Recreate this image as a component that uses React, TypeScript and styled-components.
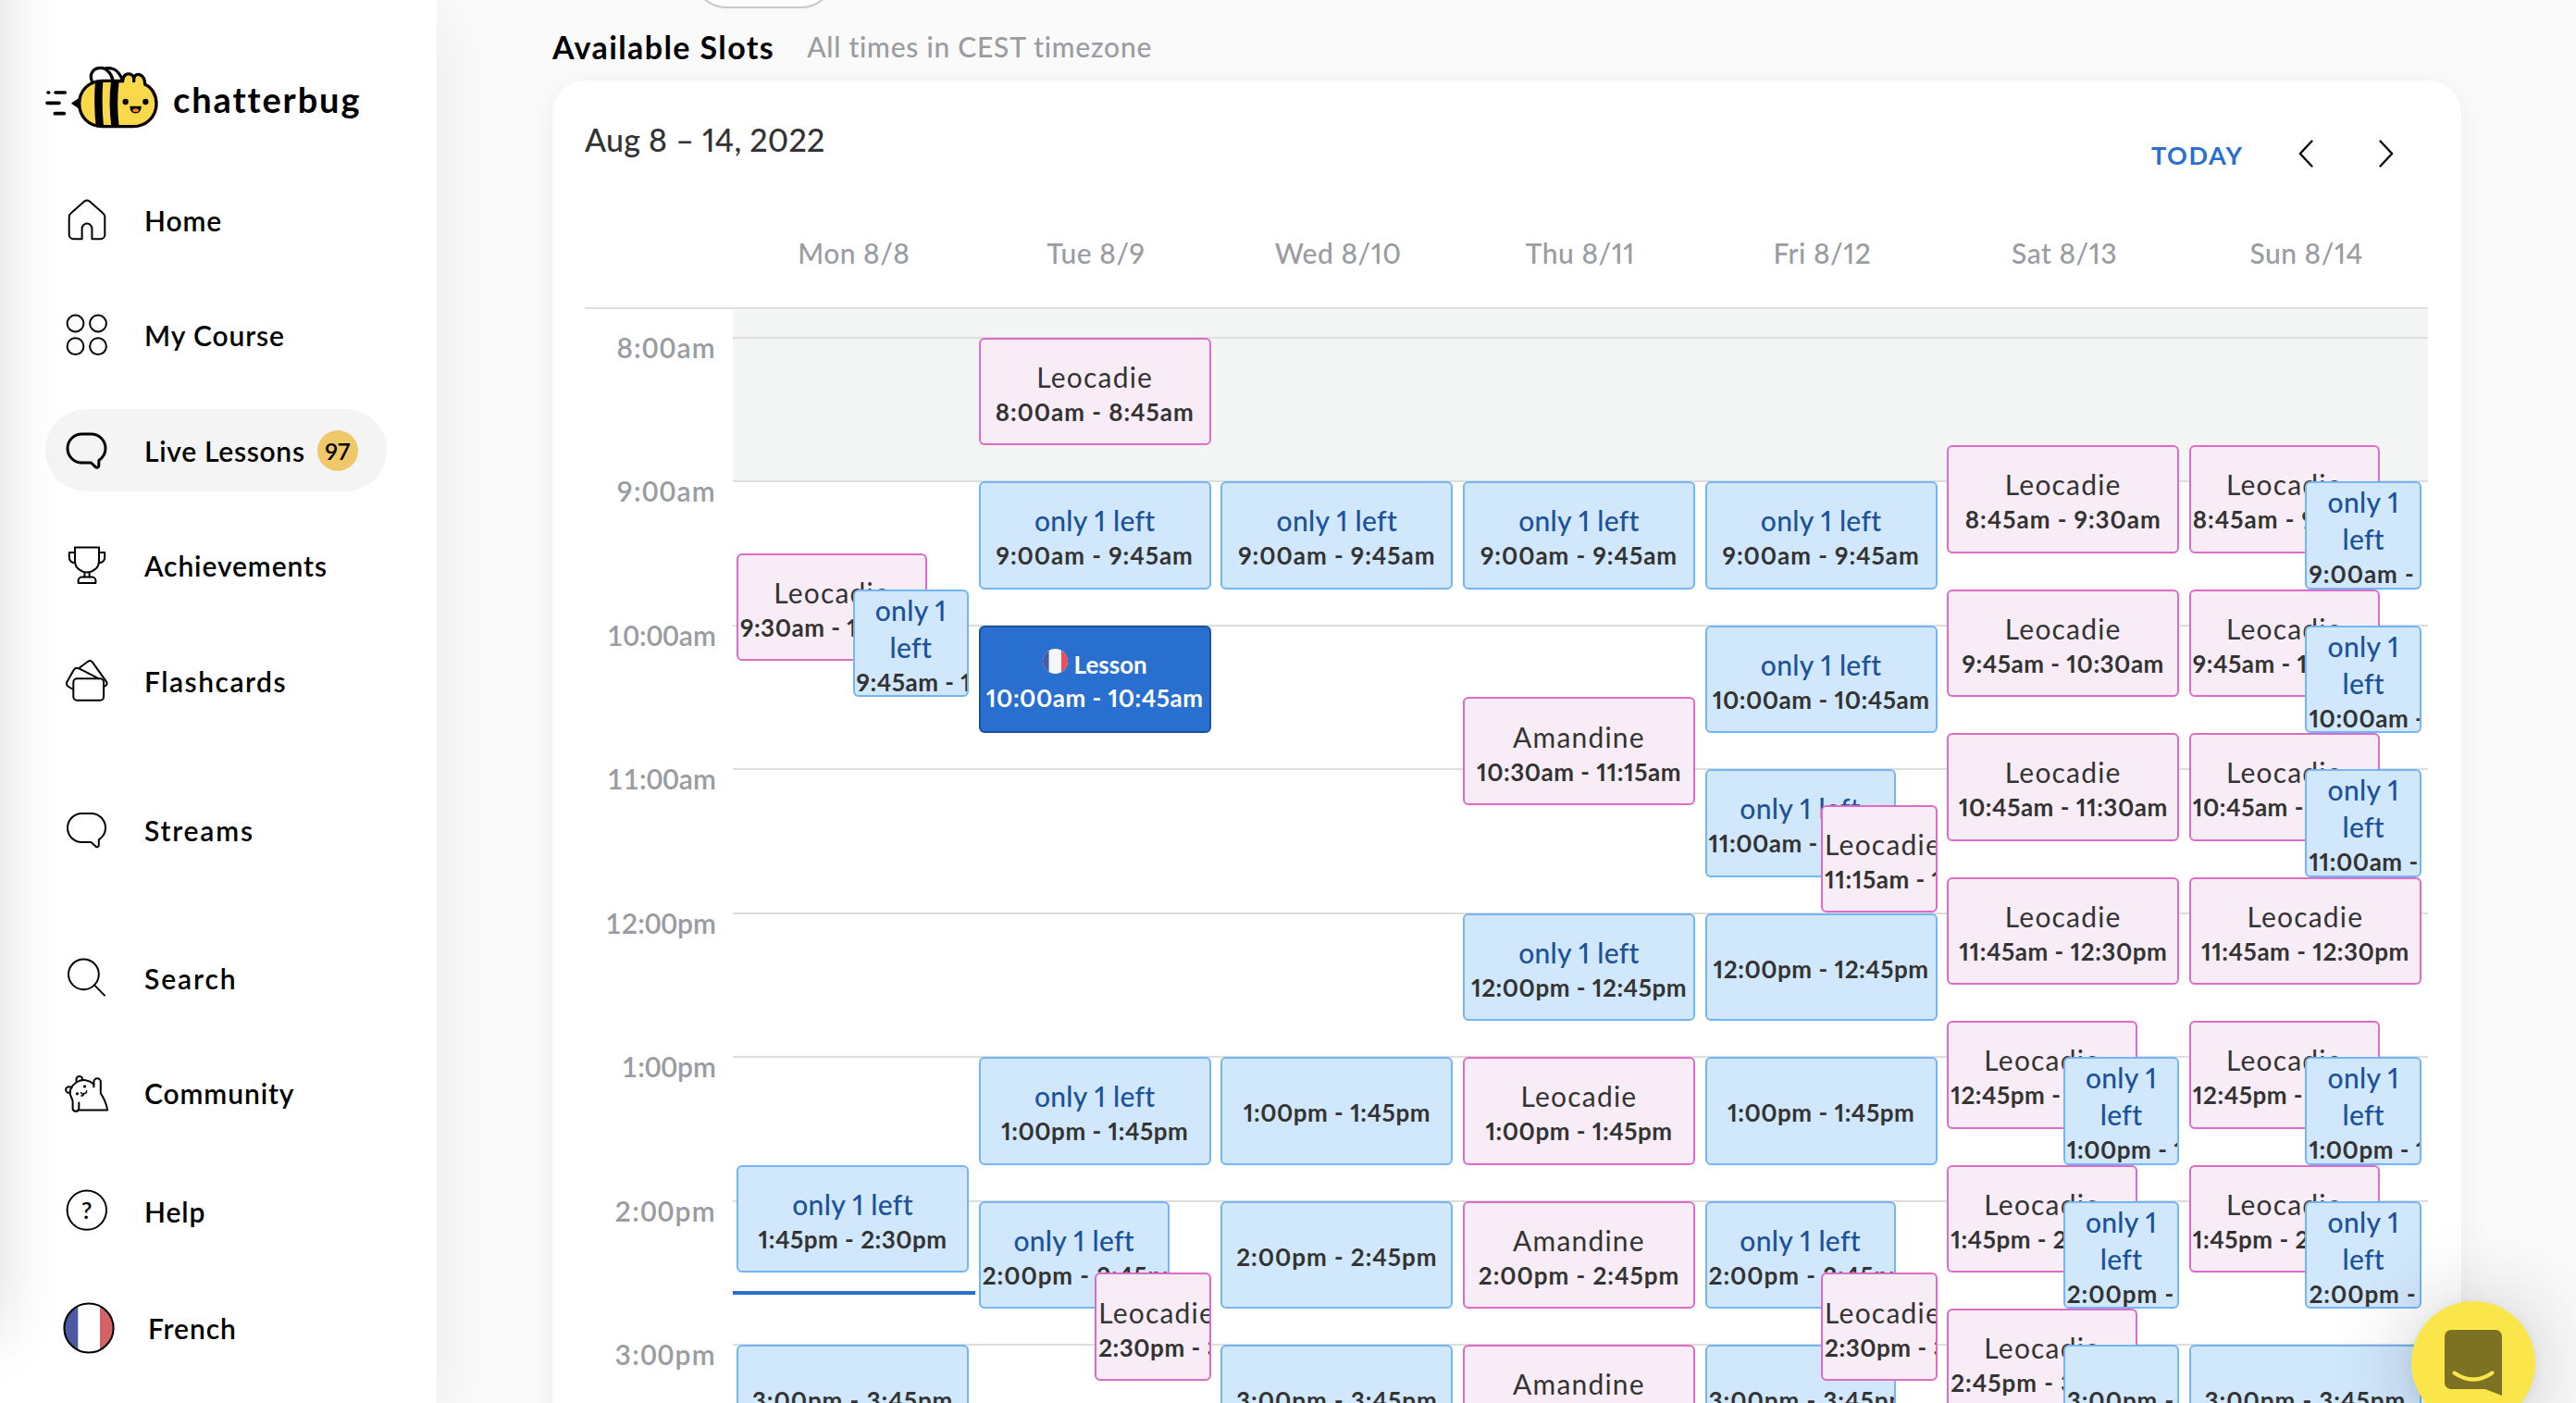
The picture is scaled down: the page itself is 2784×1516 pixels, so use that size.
import * as React from 'react';
import styled, {createGlobalStyle, css} from 'styled-components';

type Kind = 'group' | 'private' | 'booked';
type Span = 'full' | 'back' | 'front';

interface Slot {
    start: number;
    kind: Kind;
    span?: Span;
    label?: string;
}

const HOUR = 155.5;
const FIRST_HOUR = 8;
const HOURS = [8, 9, 10, 11, 12, 13, 14, 15];
const ONE_LEFT = 'only 1 left';

const group = (start: number, label?: string, span: Span = 'full'): Slot => ({start, kind: 'group', label, span});
const tutor = (start: number, label: string, span: Span = 'full'): Slot => ({start, kind: 'private', label, span});

const days: {name: string; now?: number; slots: Slot[]}[] = [
    {
        name: 'Mon 8/8',
        now: 14.63,
        slots: [
            tutor(9.5, 'Leocadie', 'back'),
            group(9.75, ONE_LEFT, 'front'),
            group(13.75, ONE_LEFT),
            group(15),
        ],
    },
    {
        name: 'Tue 8/9',
        slots: [
            tutor(8, 'Leocadie'),
            group(9, ONE_LEFT),
            {start: 10, kind: 'booked', label: 'Lesson'},
            group(13, ONE_LEFT),
            group(14, ONE_LEFT, 'back'),
            tutor(14.5, 'Leocadie', 'front'),
        ],
    },
    {
        name: 'Wed 8/10',
        slots: [group(9, ONE_LEFT), group(13), group(14), group(15)],
    },
    {
        name: 'Thu 8/11',
        slots: [
            group(9, ONE_LEFT),
            tutor(10.5, 'Amandine'),
            group(12, ONE_LEFT),
            tutor(13, 'Leocadie'),
            tutor(14, 'Amandine'),
            tutor(15, 'Amandine'),
        ],
    },
    {
        name: 'Fri 8/12',
        slots: [
            group(9, ONE_LEFT),
            group(10, ONE_LEFT),
            group(11, ONE_LEFT, 'back'),
            tutor(11.25, 'Leocadie', 'front'),
            group(12),
            group(13),
            group(14, ONE_LEFT, 'back'),
            group(15, undefined, 'back'),
            tutor(14.5, 'Leocadie', 'front'),
        ],
    },
    {
        name: 'Sat 8/13',
        slots: [
            tutor(8.75, 'Leocadie'),
            tutor(9.75, 'Leocadie'),
            tutor(10.75, 'Leocadie'),
            tutor(11.75, 'Leocadie'),
            tutor(12.75, 'Leocadie', 'back'),
            group(13, ONE_LEFT, 'front'),
            tutor(13.75, 'Leocadie', 'back'),
            group(14, ONE_LEFT, 'front'),
            tutor(14.75, 'Leocadie', 'back'),
            group(15, undefined, 'front'),
        ],
    },
    {
        name: 'Sun 8/14',
        slots: [
            tutor(8.75, 'Leocadie', 'back'),
            group(9, ONE_LEFT, 'front'),
            tutor(9.75, 'Leocadie', 'back'),
            group(10, ONE_LEFT, 'front'),
            tutor(10.75, 'Leocadie', 'back'),
            group(11, ONE_LEFT, 'front'),
            tutor(11.75, 'Leocadie'),
            tutor(12.75, 'Leocadie', 'back'),
            group(13, ONE_LEFT, 'front'),
            tutor(13.75, 'Leocadie', 'back'),
            group(14, ONE_LEFT, 'front'),
            group(15),
        ],
    },
];

function formatTime(t: number) {
    const hour = Math.floor(t);
    const minutes = Math.round((t - hour) * 60);
    const suffix = hour >= 12 ? 'pm' : 'am';
    return `${hour > 12 ? hour - 12 : hour}:${String(minutes).padStart(2, '0')}${suffix}`;
}

const BUBBLE =
    'M18.5 6H28.5A15.5 15.5 0 0 1 44 21.5C44 27 41.6 31.2 36.8 34.4V40.2A2 2 0 0 1 33.3 41.6L28.4 37H18.5A15.5 15.5 0 0 1 18.5 6Z';

const HomeIcon = () => (
    <Icon viewBox="0 0 48 48">
        <path d="M18.6 44.3H9.5A4.8 4.8 0 0 1 4.7 39.5V20.5Q4.7 18 6.8 16.3L21.2 3.6Q24 1.4 26.8 3.6L41.2 16.3Q43.3 18 43.3 20.5V39.5A4.8 4.8 0 0 1 38.5 44.3H29.4V33A5.4 5.4 0 0 0 18.6 33Z" />
    </Icon>
);

const CourseIcon = () => (
    <Icon viewBox="0 0 48 48">
        <circle cx="11.5" cy="11.5" r="8.9" />
        <circle cx="36" cy="11.5" r="8.9" />
        <circle cx="11.5" cy="36.2" r="8.9" />
        <circle cx="36" cy="36.2" r="8.9" />
    </Icon>
);

const BubbleIcon = ({bold}: {bold?: boolean}) => (
    <Icon viewBox="0 0 48 48" $bold={bold}>
        <path d={BUBBLE} />
    </Icon>
);

const TrophyIcon = () => (
    <Icon viewBox="0 0 48 48">
        <path d="M11 4.6H37V19.5C37 26.5 30.5 31.4 24 31.4S11 26.5 11 19.5Z" />
        <path d="M11 10H4.8V15C4.8 18.5 7 21 11.3 21.3M37 10H43.2V15C43.2 18.5 41 21 36.7 21.3M21.4 31.4V36.4M26.6 31.4V36.4" />
        <path d="M14.6 43V40.5A4 4 0 0 1 18.6 36.5H29.4A4 4 0 0 1 33.4 40.5V43Z" />
    </Icon>
);

const CardsIcon = () => (
    <Icon viewBox="0 0 48 48">
        <rect x="9.3" y="21.3" width="32.8" height="23.4" rx="4" />
        <path d="M9.3 33L4 30Q1 28 2.3 25L9.5 12.2Q11.5 8.8 15 10.2L36.6 21.2" />
        <path d="M15 10.2L25 2.8Q27.8 1 30 3.6L45 24.6Q47 28 42.3 30" />
    </Icon>
);

const SearchIcon = () => (
    <Icon viewBox="0 0 48 48">
        <circle cx="20.4" cy="19.8" r="16.4" />
        <path d="M32 31.4L43 42.6" />
    </Icon>
);

const CommunityIcon = () => (
    <Icon viewBox="0 0 48 48">
        <path d="M15 42.4H46.2C45 36 43 30.5 38.8 24.5V12A3.7 3.7 0 0 0 31.4 12V17.5" />
        <path d="M31.4 14.5C26 9.5 19 8.8 13.5 12C6.5 16 4 23 6.8 28C7.6 30 8.6 31.5 8.6 33.5V41A3.4 3.4 0 0 0 15.3 41V34.5" />
        <path d="M7.6 18.2C3.5 15.8.4 18.5 1.3 21.5C2 23.8 4 24.3 5.5 23.5M12.8 12.2C11.5 7.5 14 5.6 16.2 6C18.3 6.3 19.5 8 18.9 10.2" />
        <path d="M17.6 23.6Q18.5 26 20.8 24.4Q20.2 27.5 17.8 27M20.8 24.4Q23.8 24.6 23.6 21.8" strokeWidth="1.5" />
        <circle cx="21.5" cy="16.9" r="1" fill="#000" strokeWidth="1.2" />
        <circle cx="13.4" cy="24.8" r="1" fill="#000" strokeWidth="1.2" />
    </Icon>
);

const HelpIcon = () => (
    <Icon viewBox="0 0 48 48">
        <circle cx="23.8" cy="22.6" r="21.2" />
        <HelpMark x="23.8" y="31.5">
            ?
        </HelpMark>
    </Icon>
);

const FrenchFlag = () => (
    <FlagSvg viewBox="0 0 56 56">
        <clipPath id="flag-disc">
            <circle cx="28" cy="28" r="26.5" />
        </clipPath>
        <g clipPath="url(#flag-disc)">
            <rect width="56" height="56" fill="#fff" />
            <rect width="16.3" height="56" fill="#4b5aa0" />
            <rect x="40" width="16" height="56" fill="#d56268" />
        </g>
        <circle cx="28" cy="28" r="26.6" fill="none" stroke="#000" strokeWidth="2" />
    </FlagSvg>
);

const LessonFlag = () => (
    <SmallFlag viewBox="0 0 27 27">
        <clipPath id="lesson-disc">
            <circle cx="13.5" cy="13.5" r="13.5" />
        </clipPath>
        <g clipPath="url(#lesson-disc)">
            <rect width="27" height="27" fill="#f5f6fa" />
            <rect width="6.6" height="27" fill="#4a5aa8" />
            <rect x="20" width="7" height="27" fill="#ed4c5c" />
        </g>
    </SmallFlag>
);

const BeeLogo = () => (
    <BeeSvg viewBox="24 24 372 216">
        <path
            d="M36 120H38M60 120H91M33 154H72M58 188H88"
            fill="none"
            stroke="#000"
            strokeWidth="11"
            strokeLinecap="round"
        />
        <path d="M114 155L142 137V174Z" stroke="#000" strokeWidth="4" strokeLinejoin="round" />
        <path
            d="M222 42C252 36 270 58 278 84H222Z"
            fill="#fff"
            stroke="#000"
            strokeWidth="10"
            strokeLinejoin="round"
        />
        <path
            d="M180 88C166 58 184 40 206 40C228 40 246 64 246 88Z"
            fill="#fff"
            stroke="#000"
            strokeWidth="10"
            strokeLinejoin="round"
        />
        <path
            d="M212 82H278C280 54 308 54 314 72C322 52 350 60 350 94C374 104 387 130 387 156C387 198 354 230 312 230H212C168 230 137 198 137 156S168 82 212 82Z"
            fill="#f9d94a"
            stroke="#000"
            strokeWidth="10"
            strokeLinejoin="round"
        />
        <path d="M189 82H214Q209 156 216 230H191Q183 156 189 82ZM240 82H266Q257 156 266 230H241Q231 156 240 82Z" />
        <path d="M262 80H282V88H262Z" />
        <path d="M314 70V83" stroke="#000" strokeWidth="10" strokeLinecap="round" />
        <circle cx="287" cy="150" r="9.5" />
        <circle cx="352" cy="150" r="9.5" />
        <path d="M301 164H338C338 180 330 187 319.5 187S301 180 301 164Z" />
        <ellipse cx="320" cy="177.5" rx="10" ry="5.5" fill="#f0812c" />
    </BeeSvg>
);

const navItems = [
    {label: 'Home', icon: <HomeIcon />},
    {label: 'My Course', icon: <CourseIcon />},
    {label: 'Live Lessons', icon: <BubbleIcon bold />, active: true, count: 97, tracking: 0.7},
    {label: 'Achievements', icon: <TrophyIcon />},
    {label: 'Flashcards', icon: <CardsIcon />, tracking: 1.5},
    {label: 'Streams', icon: <BubbleIcon />, before: 37, tracking: 1.8},
    {label: 'Search', icon: <SearchIcon />, before: 35, tracking: 1.9},
    {label: 'Community', icon: <CommunityIcon />},
    {label: 'Help', icon: <HelpIcon />, before: 3},
    {label: 'French', icon: <FrenchFlag />, before: 2, wide: true},
];

const SlotCard = ({slot}: {slot: Slot}) => {
    const time = `${formatTime(slot.start)} - ${formatTime(slot.start + 0.75)}`;
    const top = 30.5 + (slot.start - FIRST_HOUR) * HOUR;
    const booked = slot.kind === 'booked';
    return (
        <SlotBox $kind={slot.kind} $span={slot.span ?? 'full'} style={{top}}>
            {booked && (
                <LessonTitle>
                    <LessonFlag />
                    {slot.label}
                </LessonTitle>
            )}
            {!booked && slot.label && <SlotLabel $kind={slot.kind}>{slot.label}</SlotLabel>}
            <SlotTime $light={booked} $tight={time.includes('1')}>
                {time}
            </SlotTime>
        </SlotBox>
    );
};

const App = () => (
    <Page>
        <GlobalStyle />
        <Sidebar>
            <Brand>
                <BeeLogo />
                <BrandName>chatterbug</BrandName>
            </Brand>
            <Nav>
                {navItems.map((it) => (
                    <NavItem key={it.label} $active={it.active} $before={it.before} $wide={it.wide}>
                        {it.icon}
                        <NavLabel $tracking={it.tracking}>{it.label}</NavLabel>
                        {it.count && <Badge>{it.count}</Badge>}
                    </NavItem>
                ))}
            </Nav>
        </Sidebar>
        <Main>
            <Filters>
                <FilterPill />
            </Filters>
            <Heading>
                <Title>Available Slots</Title>
                <Timezone>All times in CEST timezone</Timezone>
            </Heading>
            <Card>
                <Toolbar>
                    <Range>Aug 8 – 14, 2022</Range>
                    <Controls>
                        <Today>TODAY</Today>
                        <Chevron viewBox="0 0 16 30">
                            <path d="M14.5 1.5L1.8 15L14.5 28.5" />
                        </Chevron>
                        <Chevron viewBox="0 0 16 30">
                            <path d="M1.5 1.5L14.2 15L1.5 28.5" />
                        </Chevron>
                    </Controls>
                </Toolbar>
                <DayHeader>
                    <span />
                    {days.map((day) => (
                        <DayName key={day.name}>{day.name}</DayName>
                    ))}
                </DayHeader>
                <Body>
                    <LeadRow>
                        <HourCell $closed />
                    </LeadRow>
                    {HOURS.map((hour) => (
                        <HourRow key={hour}>
                            <HourLabel $tight={formatTime(hour).includes('1')}>{formatTime(hour)}</HourLabel>
                            <HourCell $line $closed={hour < 9} />
                        </HourRow>
                    ))}
                    <Columns>
                        {days.map((day) => (
                            <Column key={day.name}>
                                <Events>
                                    {day.slots.map((slot) => (
                                        <SlotCard key={slot.start} slot={slot} />
                                    ))}
                                </Events>
                                {day.now && <NowLine style={{top: 30 + (day.now - FIRST_HOUR) * HOUR}} />}
                            </Column>
                        ))}
                    </Columns>
                </Body>
            </Card>
        </Main>
        <EdgeShadow />
        <Messenger>
            <MessengerSvg viewBox="0 0 62 72">
                <path d="M7 0H55A7 7 0 0 1 62 7V71L44 64H7A7 7 0 0 1 0 57V7A7 7 0 0 1 7 0Z" fill="#7d7123" />
                <path
                    d="M10.5 46.5Q31 60.5 51.5 46.5"
                    fill="none"
                    stroke="#fae64b"
                    strokeWidth="4.2"
                    strokeLinecap="round"
                />
            </MessengerSvg>
        </Messenger>
    </Page>
);

const GlobalStyle = createGlobalStyle`
    * {
        box-sizing: border-box;
    }

    body {
        margin: 0;
        background: #fafafa;
        font-family: Lato, 'Open Sans', sans-serif;
        font-variant-ligatures: none;
        font-variant-numeric: proportional-nums;
    }
`;

const Page = styled.div`
    position: relative;
    display: flex;
    width: 100%;
    height: 1516px;
    overflow: hidden;
`;

const Sidebar = styled.aside`
    width: 472px;
    flex: none;
    background: #fff;
    box-shadow: 0 16px 64px rgba(0, 0, 0, 0.07);
`;

const Brand = styled.div`
    display: flex;
    align-items: center;
    height: 193px;
    padding: 28px 0 0 48px;
`;

const BeeSvg = styled.svg`
    width: 124px;
    height: 72px;
    margin-bottom: 13px;
`;

const BrandName = styled.span`
    margin: 0 0 7px 15px;
    font-size: 38px;
    font-weight: 700;
    letter-spacing: 1.9px;
`;

const Nav = styled.nav`
    display: flex;
    flex-direction: column;
    gap: 35.5px;
    padding: 0 54px 0 49px;
`;

const NavItem = styled.a<{$active?: boolean; $before?: number; $wide?: boolean}>`
    display: flex;
    align-items: center;
    height: 89px;
    margin-top: ${(p) => p.$before ?? 0}px;
    padding-left: ${(p) => (p.$wide ? 19 : 21)}px;
    gap: ${(p) => (p.$wide ? 36 : 38)}px;
    border-radius: 45px;
    background: ${(p) => (p.$active ? '#f4f4f4' : 'transparent')};
    color: #000;
`;

const Icon = styled.svg<{$bold?: boolean}>`
    width: 48px;
    height: 48px;
    flex: none;
    fill: none;
    stroke: #000;
    stroke-width: ${(p) => (p.$bold ? 3 : 2)};
    stroke-linecap: round;
    stroke-linejoin: round;
`;

const HelpMark = styled.text`
    font-size: 25px;
    font-weight: 600;
    text-anchor: middle;
    fill: #000;
    stroke: none;
`;

const FlagSvg = styled.svg`
    width: 56px;
    height: 56px;
    flex: none;
`;

const NavLabel = styled.span<{$tracking?: number}>`
    font-size: 30px;
    font-weight: 600;
    line-height: 40px;
    letter-spacing: ${(p) => p.$tracking ?? 0.9}px;
    white-space: nowrap;
`;

const Badge = styled.span`
    display: flex;
    align-items: center;
    justify-content: center;
    width: 44px;
    height: 44px;
    margin-left: -25px;
    border-radius: 50%;
    background: #efc869;
    font-size: 25px;
    font-weight: 600;
`;

const Main = styled.main`
    flex: 1;
    display: flex;
    flex-direction: column;
    padding: 0 124px 0 125px;
`;

const Filters = styled.div`
    display: flex;
    align-items: flex-end;
    height: 9px;
    padding-left: 152px;
    flex: none;
`;

const FilterPill = styled.div`
    width: 153px;
    height: 72px;
    border: 2px solid #c7c8ce;
    border-radius: 36px;
    background: #fff;
`;

const Heading = styled.div`
    display: flex;
    align-items: center;
    height: 78px;
    gap: 35px;
    padding-top: 4px;
    flex: none;
`;

const Title = styled.h1`
    margin: 0;
    font-size: 34px;
    font-weight: 700;
    letter-spacing: 1.4px;
`;

const Timezone = styled.span`
    color: #999ca1;
    font-size: 30px;
    font-weight: 500;
    letter-spacing: 0.75px;
`;

const Card = styled.section`
    height: 1500px;
    flex: none;
    padding: 0 36.5px 0 35px;
    border-radius: 36px;
    background: #fff;
    box-shadow: 0 8px 32px rgba(0, 0, 0, 0.06);
`;

const Toolbar = styled.div`
    display: flex;
    justify-content: space-between;
    align-items: flex-start;
    height: 130px;
`;

const Range = styled.div`
    margin-top: 44px;
    color: #333;
    font-size: 34px;
    font-weight: 500;
    line-height: 40px;
    letter-spacing: 0.25px;
`;

const Controls = styled.div`
    display: flex;
    align-items: center;
    margin-top: 59px;
    padding-right: 37px;
`;

const Today = styled.button`
    margin-right: 59px;
    padding: 3px 0 0;
    border: none;
    background: none;
    color: #2a6fcf;
    font: 700 27px/38px Lato, sans-serif;
    letter-spacing: 1.6px;
`;

const Chevron = styled.svg`
    width: 16px;
    height: 30px;
    margin-top: -2px;
    fill: none;
    stroke: #000;
    stroke-width: 2.3;
    stroke-linecap: round;
    stroke-linejoin: round;

    & + & {
        margin-left: 71px;
    }
`;

const DayHeader = styled.div`
    display: grid;
    grid-template-columns: 160px repeat(7, 1fr);
    align-items: center;
    height: 117px;
    padding-bottom: 3px;
    border-bottom: 2px solid #ddd;
`;

const DayName = styled.div`
    color: #999ca1;
    font-size: 30px;
    font-weight: 500;
    letter-spacing: 0.5px;
    text-align: center;
`;

const Body = styled.div`
    position: relative;
`;

const LeadRow = styled.div`
    display: flex;
    height: 29.5px;
    padding-left: 160px;
`;

const HourRow = styled.div`
    display: flex;
    height: ${HOUR}px;
`;

const HourLabel = styled.div<{$tight?: boolean}>`
    width: 160px;
    flex: none;
    padding-right: 18px;
    color: #999ca1;
    font-size: 30px;
    font-weight: 600;
    font-variant-numeric: tabular-nums;
    line-height: 22px;
    letter-spacing: ${(p) => (p.$tight ? 0.1 : 1.3)}px;
    text-align: right;
`;

const HourCell = styled.div<{$line?: boolean; $closed?: boolean}>`
    flex: 1;
    border-top: ${(p) => (p.$line ? '2px solid #ddd' : 'none')};
    background: ${(p) => (p.$closed ? '#f4f6f5' : 'transparent')};
`;

// Day columns lie over the hour rows, so a slot can start at any minute.
const Columns = styled.div`
    position: absolute;
    inset: 0 0 0 160px;
    display: grid;
    grid-template-columns: repeat(7, 1fr);
`;

const Column = styled.div`
    position: relative;
`;

const Events = styled.div`
    position: relative;
    height: 100%;
    margin: 0 2.5% 0 4px;
`;

const kinds = {
    group: css`
        border-color: #74b5f5;
        background: #d1e7fc;
    `,
    private: css`
        border-color: #de6bc5;
        background: #f8edf6;
    `,
    booked: css`
        border-color: #1b5299;
        background: #286fd0;
    `,
};

const spans = {
    full: css`
        left: 0;
        right: 0;
    `,
    back: css`
        left: 0;
        right: 45px;
    `,
    front: css`
        left: 50%;
        right: 0;
    `,
};

const SlotBox = styled.div<{$kind: Kind; $span: Span}>`
    position: absolute;
    display: flex;
    flex-direction: column;
    justify-content: center;
    height: 116.6px;
    padding: 0 2px;
    border: 2px solid;
    border-radius: 6px;
    overflow: hidden;
    text-align: center;
    ${(p) => kinds[p.$kind]}
    ${(p) => spans[p.$span]}
`;

const SlotLabel = styled.div<{$kind: Kind}>`
    color: ${(p) => (p.$kind === 'group' ? '#1b5299' : '#333')};
    font-size: 30px;
    font-weight: ${(p) => (p.$kind === 'group' ? 500 : 400)};
    line-height: 40px;
    letter-spacing: ${(p) => (p.$kind === 'group' ? 0.3 : 1.2)}px;
`;

const SlotTime = styled.div<{$light?: boolean; $tight?: boolean}>`
    margin-bottom: -4px;
    color: ${(p) => (p.$light ? '#fff' : '#333')};
    font-size: 26px;
    font-weight: 700;
    line-height: 36px;
    letter-spacing: ${(p) => (p.$tight ? 0.5 : 0.95)}px;
    white-space: nowrap;
`;

const LessonTitle = styled.div`
    display: flex;
    align-items: center;
    justify-content: center;
    gap: 7px;
    color: #fff;
    font-size: 26px;
    font-weight: 700;
    line-height: 36px;
`;

const SmallFlag = styled.svg`
    width: 27px;
    height: 27px;
    margin-bottom: 6px;
`;

const NowLine = styled.div`
    position: absolute;
    left: 0;
    right: 0;
    height: 4px;
    background: #286fcf;
`;

const EdgeShadow = styled.div`
    position: absolute;
    top: -200px;
    left: -300px;
    width: 300px;
    height: 1640px;
    box-shadow: 0 0 64px rgba(0, 0, 0, 0.14);
`;

const Messenger = styled.button`
    position: absolute;
    top: 1406px;
    right: 44px;
    display: flex;
    align-items: flex-start;
    justify-content: center;
    width: 134px;
    height: 134px;
    padding: 31px 0 0;
    border: none;
    border-radius: 50%;
    background: #fae64b;
    box-shadow: 0 2px 12px rgba(0, 0, 0, 0.06), 0 4px 96px rgba(0, 0, 0, 0.22);
`;

const MessengerSvg = styled.svg`
    width: 62px;
    height: 72px;
`;

export default App;
